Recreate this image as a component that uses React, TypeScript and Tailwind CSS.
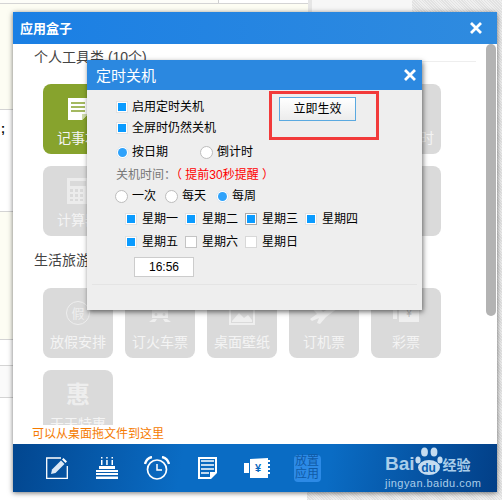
import React from "react";

const Box = ({ on, cls = "border-[#e2e2e2]" }: { on?: boolean; cls?: string }) => (
  <span className={`flex w-3 h-3 shrink-0 items-center justify-center border bg-white ${cls}`}>
    {on && <span className="block w-2 h-2 bg-[#0a9bff]" />}
  </span>
);

const Radio = ({ on }: { on?: boolean }) => (
  <span className={`flex w-[13px] h-[13px] shrink-0 items-center justify-center rounded-full border bg-white ${on ? "border-[#dfe6ec]" : "border-[#bdbdbd]"}`}>
    {on && <span className="block w-[9px] h-[9px] rounded-full bg-[#2ea2fb]" />}
  </span>
);

const Note = ({ c }: { c: string }) => (
  <svg width="20" height="22" viewBox="0 0 20 22">
    <path d="M0 0H20V16L14 22H0Z" fill="#fff" />
    <path d="M3 5H17M3 9H17M3 13H17" stroke={c} strokeWidth="1.6" />
    <path d="M14 22V16H20Z" fill="#cfdcaa" />
  </svg>
);
const Calc = () => (
  <svg width="22" height="26" viewBox="0 0 22 26" fill="#ececec">
    <path d="M0 0H22V26H0ZM3 3V8H19V3ZM3 11V14H6V11ZM8 11V14H11V11ZM13 11V14H16V11ZM3 16V19H6V16ZM8 16V19H11V16ZM13 16V19H16V16ZM3 21V23H6V21ZM8 21V23H11V21ZM13 21V23H16V21Z" fillRule="evenodd" />
  </svg>
);
const Jia = () => (
  <span className="flex w-6 h-6 items-center justify-center rounded-full border border-[#eeeeee] text-[13px] leading-none text-[#eeeeee]">假</span>
);
const Train = () => (
  <svg width="24" height="24" viewBox="0 0 24 24" fill="#efefef">
    <path d="M4 0H20V17H4ZM8 12a1.5 1.5 0 1 0 0.01 0ZM16 12a1.5 1.5 0 1 0 0.01 0Z" fillRule="evenodd" />
    <path d="M5 18H9L7 21H1ZM15 18H19L23 21H17Z" />
  </svg>
);
const Photo = () => (
  <svg width="26" height="24" viewBox="0 0 26 24">
    <path d="M1 1H25V23H1Z" fill="none" stroke="#efefef" strokeWidth="2" />
    <path d="M3 20L10 12L15 17L19 14L23 19V21H3Z" fill="#efefef" />
  </svg>
);
const Plane = () => (
  <svg width="32" height="24" viewBox="0 0 32 24" fill="#efefef">
    <path d="M2 5L8 3L15 11L27 4C30 3 32 5 30 7L18 16L12 23L9 22L11 17L4 20L2 18L9 13Z" />
  </svg>
);
const Lottery = () => (
  <svg width="26" height="20" viewBox="0 0 26 20">
    <path d="M0 4H4V16H0ZM6 1H26V19H6Z" fill="#efefef" />
    <text x="16" y="14" fontSize="10" textAnchor="middle" fill="#bdbdbd">¥</text>
  </svg>
);
const Hui = () => (
  <span className="block text-[24px] font-bold leading-none text-[#eeeeee]">惠</span>
);

type T = { label: string; icon?: React.ReactNode; green?: boolean };

const Tile = ({ label, icon, green }: T) => (
  <div className={`flex h-[70px] w-[70px] flex-col items-center rounded-lg ${green ? "bg-[#87a32d]" : "bg-[#dadada]"}`}>
    <div className="flex h-[44px] w-full items-center justify-center pt-[6px]">{icon}</div>
    <span className="whitespace-nowrap text-[14px] leading-5 text-[#f4f4f4]">{label}</span>
  </div>
);

const Hat = () => (
  <svg width="22" height="22" viewBox="0 0 22 22" fill="none" stroke="#fff" strokeWidth="1.3">
    <path d="M15 1H0.7V21.3H21.3V9" />
    <path d="M5 17L6 12.5L15 3.5L18.5 7L9.5 16Z" fill="#dbe8f5" stroke="none" />
    <path d="M16 2.5L17.5 1L21 4.5L19.5 6Z" fill="#fff" stroke="none" />
  </svg>
);

const Cake = () => (
  <svg width="22" height="22" viewBox="0 0 22 22" fill="#fff">
    <path d="M5 0h1.5v1.5H5ZM10.2 0h1.5v1.5h-1.5ZM15.5 0h1.5v1.5h-1.5Z" />
    <path d="M5 3h1.5v5H5ZM10.2 3h1.5v5h-1.5ZM15.5 3h1.5v5h-1.5Z" />
    <path d="M3 9H19V12H3ZM0 13H22V15H0ZM0 16H22V18H0ZM0 19.5H22V22H0Z" />
  </svg>
);

const Clock = () => (
  <svg width="26" height="24" viewBox="0 0 26 24" fill="none" stroke="#fff">
    <circle cx="13" cy="13.5" r="9.5" strokeWidth="1.7" />
    <path d="M13 8V14H18" strokeWidth="1.5" />
    <path d="M1 8C2 4 5 1.5 8 1M25 8C24 4 21 1.5 18 1" strokeWidth="2.4" />
  </svg>
);

const Doc = () => (
  <svg width="19" height="22" viewBox="0 0 19 22">
    <path d="M0 0H19V16L13 22H0Z" fill="#fff" />
    <path d="M2 2H17V15H12V20H2Z" fill="#0a69bf" />
    <path d="M3 4H16M3 8H16M3 12H16M3 16H11" stroke="#fff" strokeWidth="1.7" />
  </svg>
);

const Ticket = () => (
  <svg width="26" height="20" viewBox="0 0 26 20">
    <path d="M0 5H5V15H0ZM6 1L24 0V20H6Z" fill="#fff" />
    <path d="M24 2h2v2h-2ZM24 6h2v2h-2ZM24 10h2v2h-2ZM24 14h2v2h-2Z" fill="#fff" />
    <text x="14" y="14" fontSize="11" fontWeight="700" textAnchor="middle" fill="#0a69bf">¥</text>
  </svg>
);

const hatch = "bg-[repeating-linear-gradient(45deg,#e2e2e2,#e2e2e2_1px,#efefef_1px,#efefef_2px)]";

export default function App() {
  return (
    <div className="relative flex h-[500px] w-[502px] overflow-hidden bg-white font-['Liberation_Sans','Noto_Sans_CJK_SC',sans-serif] text-black">
      {/* desktop behind the window */}
      <div className="flex h-full w-[308px] flex-col">
        <div className="h-[3px] w-[219px] shrink-0 border-r border-[#cfcfcf] bg-[#fdfdf8]" />
        <div className="h-[107px] border-t border-b border-[#d4d4d4] bg-[#fdfdf3]" />
        <div className="h-[102px] border-b border-[#d4d4d4] bg-white pt-[11px] pl-[1px] text-[12px] font-bold leading-4">;</div>
        <div className="h-[128px] border-b border-[#d4d4d4] bg-[#fdfdf3]" />
        <div className="h-[26px] border-b border-[#d4d4d4] bg-white" />
        <div className="h-[32px] border-b border-[#d4d4d4] bg-[#fafafa]" />
        <div className="flex-1 bg-white" />
      </div>
      <div className="flex w-[104px] flex-col border-l-4 border-[#e6e6e6] bg-[#f7f7f7]" />
      <div className={`flex-1 ${hatch}`} />
      <div className={`absolute bottom-0 left-[307px] right-0 h-[8px] ${hatch}`} />

      {/* app box window */}
      <div className="absolute left-[13px] top-[12px] flex h-[480px] w-[484px] flex-col bg-white shadow-[0_1px_5px_rgba(0,0,0,0.55)]">
        <div className="flex h-8 shrink-0 items-center justify-between bg-gradient-to-r from-[#1a7fe4] to-[#2f8bdf] pl-[7px] pr-[15px]">
          <span className="text-[13px] font-bold leading-none text-white">应用盒子</span>
          <svg width="12" height="12" viewBox="0 0 12 12"><path d="M1 1L11 11M11 1L1 11" stroke="#fff" strokeWidth="2.8" /></svg>
        </div>

        <div className="relative flex min-h-0 flex-1 flex-col overflow-hidden pl-[21px] pr-[21px] pt-[3px]">
          <div className="flex items-center">
            <span className="whitespace-nowrap text-[14px] leading-5 text-[#444]">个人工具类 (10个)</span>
            <span className="ml-[8px] mt-[8px] h-px flex-1 bg-[#eeeeee]" />
          </div>
          <div className="mt-[17px] ml-[9px] grid grid-cols-[repeat(5,70px)] gap-3">
            <Tile green label="记事本" icon={<Note c="#87a32d" />} />
            <Tile label="日历" />
            <Tile label="闹钟" />
            <Tile label="便签" />
            <Tile label="整点报时" />
            <Tile label="计算器" icon={<Calc />} />
            <Tile label="截图" />
            <Tile label="取色" />
            <Tile label="放大" />
            <Tile label="翻译" />
          </div>
          <div className="mt-[14px] text-[14px] leading-5 text-[#444]">生活旅游类</div>
          <div className="mt-[18px] ml-[9px] grid grid-cols-[repeat(5,70px)] gap-3">
            <Tile label="放假安排" icon={<Jia />} />
            <Tile label="订火车票" icon={<Train />} />
            <Tile label="桌面壁纸" icon={<Photo />} />
            <Tile label="订机票" icon={<Plane />} />
            <Tile label="彩票" icon={<Lottery />} />
            <Tile label="天天特惠" icon={<Hui />} />
          </div>
          <div className="absolute right-[1px] top-0 h-[272px] w-[10px] rounded-b-md rounded-t-md bg-[#b3b3b3]" />
        </div>

        <div className="h-[19px] shrink-0 bg-white pl-[19px] text-[12px] leading-[19px] text-[#f57a00]">可以从桌面拖文件到这里</div>

        <div className="flex h-12 shrink-0 items-center bg-[linear-gradient(100deg,#02468f_0%,#0a6cc4_35%,#0a6cc4_65%,#023f87_100%)] pl-[19px]">
          <span className="flex w-[50px] justify-center"><Hat /></span>
          <span className="flex w-[50px] justify-center"><Cake /></span>
          <span className="flex w-[50px] justify-center"><Clock /></span>
          <span className="flex w-[50px] justify-center"><Doc /></span>
          <span className="flex w-[50px] justify-center"><Ticket /></span>
          <span className="flex w-[50px] justify-center">
            <span className="flex h-[27px] w-[27px] items-center justify-center rounded-sm bg-[#2c8ae6] text-center text-[12px] leading-[13px] text-[#0f5aa6]">放置<br />应用</span>
          </span>
        </div>
      </div>

      {/* Baidu watermark */}
      <div className="absolute left-[385px] top-[447px] flex w-[92px] flex-col items-start text-[#a9cdea]">
        <div className="flex h-[28px] items-end">
          <span className="text-[19px] font-bold leading-[22px]">Bai</span>
          <span className="relative h-[28px] w-[28px]">
            <svg width="28" height="28" viewBox="0 0 28 28" fill="#c5dcf0" className="absolute left-0 top-0">
              <ellipse cx="3" cy="13" rx="2.6" ry="3.5" />
              <ellipse cx="9.5" cy="5" rx="3.4" ry="4.5" />
              <ellipse cx="19" cy="5" rx="3.4" ry="4.5" />
              <ellipse cx="25" cy="13" rx="2.6" ry="3.5" />
              <ellipse cx="14" cy="20.5" rx="11" ry="7.5" />
            </svg>
            <span className="absolute bottom-[1px] left-0 w-[28px] text-center text-[12px] font-bold leading-none text-[#0a5fb0]">du</span>
          </span>
          <span className="text-[14px] font-bold leading-[20px]">经验</span>
        </div>
        <span className="mt-[1px] whitespace-nowrap text-[11px] leading-[14px] tracking-[0.45px] text-[#a9cdea]">jingyan.baidu.com</span>
      </div>

      {/* shutdown dialog */}
      <div className="absolute left-[87px] top-[60px] flex h-[250px] w-[335px] flex-col bg-[#eeeeee] text-[12px] leading-4 shadow-[1px_2px_5px_rgba(0,0,0,0.55)]">
        <div className="flex h-[30px] shrink-0 items-center justify-between bg-[#2b88e0] pl-[9px] pr-[6px]">
          <span className="text-[15px] leading-none text-white">定时关机</span>
          <svg width="12" height="12" viewBox="0 0 12 12"><path d="M1 1L11 11M11 1L1 11" stroke="#fff" strokeWidth="2.8" /></svg>
        </div>
        <div className="flex flex-1 flex-col pl-[29px] pt-[9px]">
          <div className="flex items-center gap-[4px]"><Box on /><span>启用定时关机</span></div>
          <div className="mt-[5px] flex items-center gap-[4px]"><Box on /><span>全屏时仍然关机</span></div>
          <div className="mt-[8px] flex items-center">
            <span className="flex w-[84px] items-center gap-[3px]"><Radio on /><span>按日期</span></span>
            <span className="flex items-center gap-[4px]"><Radio /><span>倒计时</span></span>
          </div>
          <div className="mt-[7px] text-[#777]">关机时间：<span className="text-[#ff0000]">（ 提前30秒提醒 ）</span></div>
          <div className="-ml-[1px] mt-[5px] flex items-center">
            <span className="flex w-[50px] items-center gap-[4px]"><Radio /><span>一次</span></span>
            <span className="flex w-[51px] items-center gap-[4px]"><Radio /><span>每天</span></span>
            <span className="flex items-center gap-[3px]"><Radio on /><span>每周</span></span>
          </div>
          <div className="ml-[9px] mt-[7px] grid grid-cols-[repeat(4,60px)] gap-y-[7px]">
            <span className="flex items-center gap-[5px]"><Box on /><span>星期一</span></span>
            <span className="flex items-center gap-[5px]"><Box on /><span>星期二</span></span>
            <span className="flex items-center gap-[5px]"><Box on cls="border-[#aaaaaa]" /><span>星期三</span></span>
            <span className="flex items-center gap-[5px]"><Box on /><span>星期四</span></span>
            <span className="flex items-center gap-[5px]"><Box on /><span>星期五</span></span>
            <span className="flex items-center gap-[5px]"><Box cls="border-[#c4c4c4]" /><span>星期六</span></span>
            <span className="flex items-center gap-[5px]"><Box cls="border-[#d8d8d8]" /><span>星期日</span></span>
          </div>
          <div className="ml-[18px] mt-[7px] flex h-5 w-[60px] items-center justify-center border border-[#cccccc] bg-white">16:56</div>
        </div>
        <div className="mx-[5px] mb-[25px] h-px bg-[#e4e4e4]" />
      </div>

      {/* apply button + annotation */}
      <div className="absolute left-[279px] top-[97px] flex h-6 w-[77px] items-center justify-center border border-[#5aa9e0] bg-gradient-to-b from-white to-[#ececec] text-[12px]">立即生效</div>
      <div className="absolute left-[269px] top-[91px] h-[49px] w-[110px] border-[3px] border-[#f23a3a]" />
    </div>
  );
}
